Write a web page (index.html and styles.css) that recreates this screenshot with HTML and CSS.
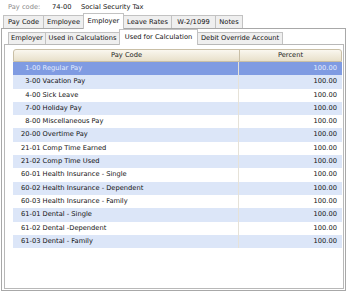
FILE: index.html
```html
<!DOCTYPE html>
<html lang="en">
<head>
    <meta charset="UTF-8">
    <title>Pay Code - Social Security Tax</title>
    <link rel="stylesheet" href="styles.css">
</head>
<body>
    <div class="top">
        <span class="lbl">Pay code:</span>
        <span class="code">74-00</span>
        <span class="name">Social Security Tax</span>
    </div>

    <div class="tabs main-tabs">
        <div class="tab w40">Pay Code</div>
        <div class="tab w40">Employee</div>
        <div class="tab w40 active">Employer</div>
        <div class="tab w48">Leave Rates</div>
        <div class="tab w44">W-2/1099</div>
        <div class="tab w27">Notes</div>
    </div>

    <div class="panel">
        <div class="tabs sub-tabs">
            <div class="tab w37">Employer</div>
            <div class="tab w74">Used in Calculations</div>
            <div class="tab w78 active">Used for Calculation</div>
            <div class="tab w85">Debit Override Account</div>
        </div>

        <div class="subpanel">
            <div class="grid">
                <div class="grid-head">
                    <div class="col-code">Pay Code</div>
                    <div class="col-pct">Percent</div>
                </div>
                <div class="row selected"><div class="col-code"><span class="num">1-00</span> Regular Pay</div><div class="col-pct">100.00</div></div>
                <div class="row"><div class="col-code"><span class="num">3-00</span> Vacation Pay</div><div class="col-pct">100.00</div></div>
                <div class="row"><div class="col-code"><span class="num">4-00</span> Sick Leave</div><div class="col-pct">100.00</div></div>
                <div class="row"><div class="col-code"><span class="num">7-00</span> Holiday Pay</div><div class="col-pct">100.00</div></div>
                <div class="row"><div class="col-code"><span class="num">8-00</span> Miscellaneous Pay</div><div class="col-pct">100.00</div></div>
                <div class="row"><div class="col-code"><span class="num">20-00</span> Overtime Pay</div><div class="col-pct">100.00</div></div>
                <div class="row"><div class="col-code"><span class="num">21-01</span> Comp Time Earned</div><div class="col-pct">100.00</div></div>
                <div class="row"><div class="col-code"><span class="num">21-02</span> Comp Time Used</div><div class="col-pct">100.00</div></div>
                <div class="row"><div class="col-code"><span class="num">60-01</span> Health Insurance - Single</div><div class="col-pct">100.00</div></div>
                <div class="row"><div class="col-code"><span class="num">60-02</span> Health Insurance - Dependent</div><div class="col-pct">100.00</div></div>
                <div class="row"><div class="col-code"><span class="num">60-03</span> Health Insurance - Family</div><div class="col-pct">100.00</div></div>
                <div class="row"><div class="col-code"><span class="num">61-01</span> Dental - Single</div><div class="col-pct">100.00</div></div>
                <div class="row"><div class="col-code"><span class="num">61-02</span> Dental -Dependent</div><div class="col-pct">100.00</div></div>
                <div class="row"><div class="col-code"><span class="num">61-03</span> Dental - Family</div><div class="col-pct">100.00</div></div>
            </div>
        </div>
    </div>
</body>
</html>
```

FILE: styles.css
```css
body {
    font-family: 'DejaVu Sans', Verdana, sans-serif;
    font-size: 6.7px;
    color: #111;
    background-color: #fff;
    margin: 0;
    width: 347px;
    height: 292px;
    overflow: hidden;
}
.top {
    display: flex;
    align-items: center;
    height: 14px;
    padding-left: 8px;
}
.top .lbl {
    width: 44px;
    color: #8a8a8a;
}
.top .code {
    width: 29px;
}
.tabs {
    display: flex;
    align-items: flex-end;
}
.main-tabs {
    height: 14px;
    padding-left: 3px;
}
.tab {
    box-sizing: border-box;
    height: 13px;
    line-height: 12px;
    text-align: center;
    white-space: nowrap;
    background-color: #efefef;
    border: 1px solid #c2c2c2;
    border-bottom: none;
    margin-right: -1px;
}
.tab.active {
    height: 16px;
    line-height: 14px;
    background-color: #fff;
    position: relative;
    z-index: 1;
    margin-bottom: -1px;
}
.w27 { width: 28px; }
.w37 { width: 38px; }
.w40 { width: 41px; }
.w44 { width: 45px; }
.w48 { width: 49px; }
.w74 { width: 75px; }
.w78 { width: 79px; }
.w85 { width: 86px; }
.panel {
    box-sizing: border-box;
    margin-left: 1px;
    width: 345px;
    height: 263px;
    border: 1px solid #a8a8a8;
}
.sub-tabs {
    height: 15px;
    padding-left: 6px;
}
.sub-tabs .tab {
    height: 12px;
    line-height: 11px;
}
.sub-tabs .tab.active {
    height: 16px;
    line-height: 14px;
}
.subpanel {
    box-sizing: border-box;
    margin-left: 2px;
    width: 340px;
    height: 245px;
    border: 1px solid #b8b8b8;
    padding: 4px 1px 0 8px;
}
.grid-head {
    display: flex;
    height: 13px;
    box-sizing: border-box;
    border: 1px solid #c9bfa6;
    border-radius: 3px 3px 0 0;
    background: linear-gradient(#faf7ef, #e8e0ca);
    color: #222;
    line-height: 11px;
}
.grid-head .col-code {
    width: 225px;
    text-align: center;
    border-right: 1px solid #c9bfa6;
}
.grid-head .col-pct {
    flex: 1;
    text-align: center;
}
.row {
    display: flex;
    height: 13.3px;
    line-height: 13.3px;
    background-color: #fff;
}
.row:nth-child(odd) {
    background-color: #dce6f8;
}
.row .col-code {
    width: 226px;
    box-sizing: border-box;
    padding-left: 8px;
    border-right: 1px solid #e6e2d8;
    white-space: nowrap;
}
.row .num {
    display: inline-block;
    width: 2.91em;
    text-align: right;
}
.row .col-pct {
    flex: 1;
    text-align: right;
    padding-right: 5px;
}
.row.selected {
    background-color: #7f9be2;
    color: #e6eeff;
}
```
